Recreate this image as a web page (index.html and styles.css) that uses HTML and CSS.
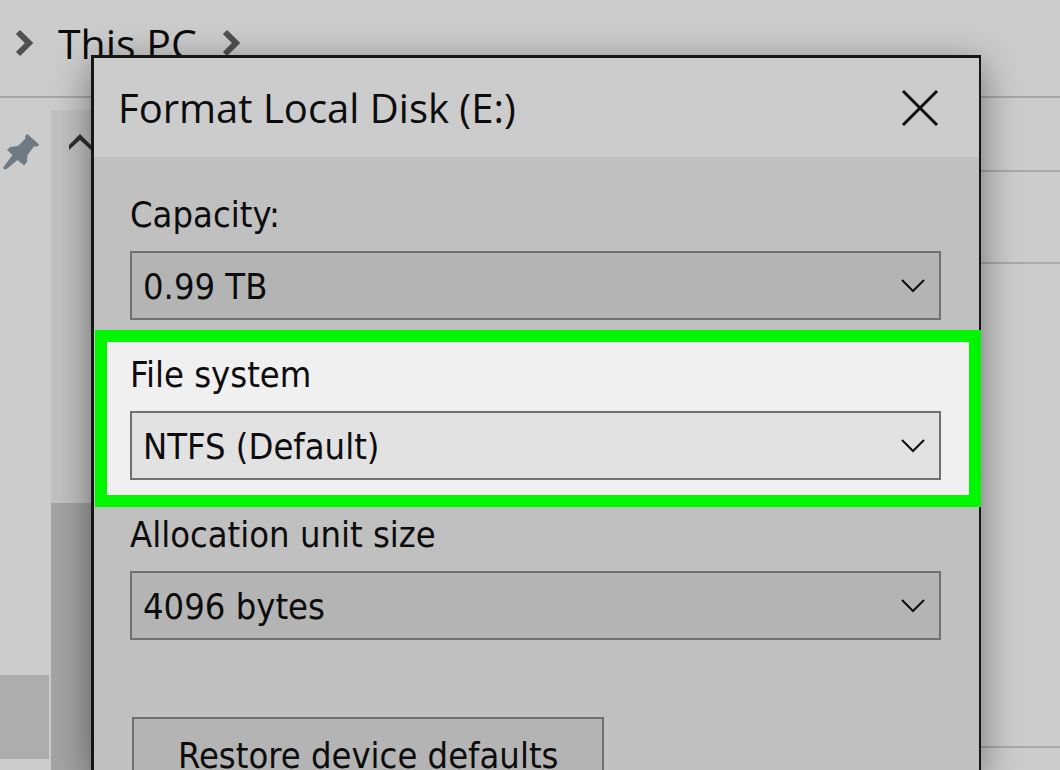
FILE: index.html
```html
<!DOCTYPE html>
<html lang="en">
<head>
    <meta charset="UTF-8">
    <meta name="viewport" content="width=device-width, initial-scale=1.0">
    <title>Format Local Disk (E:)</title>
    <link rel="stylesheet" href="styles.css">
</head>
<body>
    <!-- Explorer window behind the dialog -->
    <div class="explorer">
        <nav class="breadcrumb">
            <svg class="crumb-arrow" viewBox="0 0 20 28"><path d="M4 3l11 11L4 25"/></svg>
            <span>This PC</span>
            <svg class="crumb-arrow" viewBox="0 0 20 28"><path d="M4 3l11 11L4 25"/></svg>
        </nav>
        <div class="panes">
            <div class="sidebar">
                <svg class="pin" viewBox="0 0 36 36">
                    <path d="M24.500 0L36 10.500L34.500 12.500L31 12.500L24.500 21L24 28L21 31.500L14.500 26L3 35.500L0.500 35L0.500 33L9.500 21L4 16L7 13L15 12L22.500 4.500L22 2Z"/>
                </svg>
                <div class="selected-item"></div>
            </div>
            <div class="scrollbar">
                <svg class="scroll-up" viewBox="0 0 24 18"><path d="M1 17V12L12 1L23 12V17L12 7Z"/></svg>
                <div class="thumb"></div>
            </div>
            <div class="files">
                <div class="row row-tools"></div>
                <div class="row row-header"></div>
                <div class="row row-list"></div>
            </div>
        </div>
    </div>

    <!-- Format dialog -->
    <form class="dialog">
        <header class="titlebar">
            <h1>Format Local Disk (E:)</h1>
            <button type="button" class="close" aria-label="Close">
                <svg viewBox="0 0 38 38"><path d="M2 2l34 34M36 2L2 36"/></svg>
            </button>
        </header>

        <div class="field">
            <label for="capacity">Capacity:</label>
            <div class="combo">
                <select id="capacity"><option>0.99 TB</option></select>
                <svg viewBox="0 0 26 16"><path d="M2 2l11 11L24 2"/></svg>
            </div>
        </div>

        <div class="field highlight">
            <label for="filesystem">File system</label>
            <div class="combo">
                <select id="filesystem"><option>NTFS (Default)</option></select>
                <svg viewBox="0 0 26 16"><path d="M2 2l11 11L24 2"/></svg>
            </div>
        </div>

        <div class="field">
            <label for="allocation">Allocation unit size</label>
            <div class="combo">
                <select id="allocation"><option>4096 bytes</option></select>
                <svg viewBox="0 0 26 16"><path d="M2 2l11 11L24 2"/></svg>
            </div>
        </div>

        <button type="button" class="restore">Restore device defaults</button>
    </form>
</body>
</html>
```
FILE: styles.css
```css
* {
    box-sizing: border-box;
}

body {
    position: relative;
    height: 100vh;
    margin: 0;
    overflow: hidden;
    background: #cccccc;
    color: #0c0c0c;
    font-family: "DejaVu Sans Condensed", "Noto Sans", sans-serif;
    font-size: 36px;
}

/* Explorer window */
.explorer {
    display: flex;
    flex-direction: column;
    height: 100%;
}

.breadcrumb {
    display: flex;
    align-items: center;
    gap: 24px;
    height: 98px;
    padding: 0 14px 10px;
    border-bottom: 2px solid #a6a6a6;
    font-family: "Open Sans", "Noto Sans", sans-serif;
    font-size: 41px;
}

.crumb-arrow {
    width: 20px;
    height: 28px;
    fill: none;
    stroke: #505050;
    stroke-width: 6;
}

.panes {
    display: flex;
    flex: 1;
}

.sidebar {
    width: 51px;
    padding: 36px 2px 0 0;
}

.pin {
    display: block;
    width: 36px;
    height: 36px;
    margin-left: 3px;
    fill: #6f7a83;
}

.selected-item {
    height: 84px;
    margin-top: 505px;
    background: #adadad;
}

.scrollbar {
    display: flex;
    flex-direction: column;
    width: 57px;
    margin-top: 12px;
    background: #c2c2c2;
}

.scroll-up {
    width: 24px;
    height: 18px;
    margin: 23px 17px 0;
    fill: #303030;
}

.thumb {
    flex: 1;
    margin-top: 352px;
    background: #a4a4a4;
}

.files {
    flex: 1;
}

.row {
    border-bottom: 2px solid #a9a9a9;
}

.row-tools {
    height: 74px;
}

.row-header {
    height: 92px;
}

.row-list {
    height: 484px;
}

/* Dialog */
.dialog {
    position: absolute;
    top: 55px;
    left: 91px;
    right: 79px;
    bottom: 0;
    border: solid #161616;
    border-width: 3px 2px 0 3px;
    background: #c0c0c0;
    box-shadow: 0 10px 36px rgba(0, 0, 0, 0.45);
}

.titlebar {
    display: flex;
    align-items: center;
    justify-content: space-between;
    height: 99px;
    margin-bottom: 34px;
    padding: 0 40px 0 24px;
    background: #cccccc;
}

.titlebar h1 {
    margin: 0;
    font-family: "Open Sans", "Noto Sans", sans-serif;
    font-size: 40px;
    font-weight: 400;
}

.close {
    width: 38px;
    height: 38px;
    padding: 0;
    border: none;
    background: none;
}

.close svg {
    display: block;
    fill: none;
    stroke: #0c0c0c;
    stroke-width: 3;
}

.field {
    padding: 0 38px 0 36px;
}

.field label {
    display: block;
    margin-bottom: 12px;
    line-height: 48px;
}

.combo {
    display: grid;
    align-items: center;
}

.combo select,
.combo svg {
    grid-area: 1 / 1;
}

.combo select {
    appearance: none;
    width: 100%;
    height: 69px;
    padding: 2px 60px 0 11px;
    border: 2px solid #707070;
    border-radius: 0;
    background: #b4b4b4;
    color: inherit;
    font: inherit;
}

.combo svg {
    justify-self: end;
    width: 26px;
    height: 16px;
    margin-right: 15px;
    fill: none;
    stroke: #0c0c0c;
    stroke-width: 2;
    pointer-events: none;
}

/* Green frame reaches over the dialog border on the right */
.highlight {
    margin: 10px -2px 4px 1px;
    padding: 9px 28px 15px 23px;
    border: 12px solid #00f700;
    background: #f0f0f0;
}

.highlight select {
    background: #e2e2e2;
}

.restore {
    display: block;
    height: 76px;
    margin: 77px 0 0 38px;
    padding: 0 44px;
    border: 2px solid #707070;
    background: #b4b4b4;
    color: inherit;
    font: inherit;
}
```
